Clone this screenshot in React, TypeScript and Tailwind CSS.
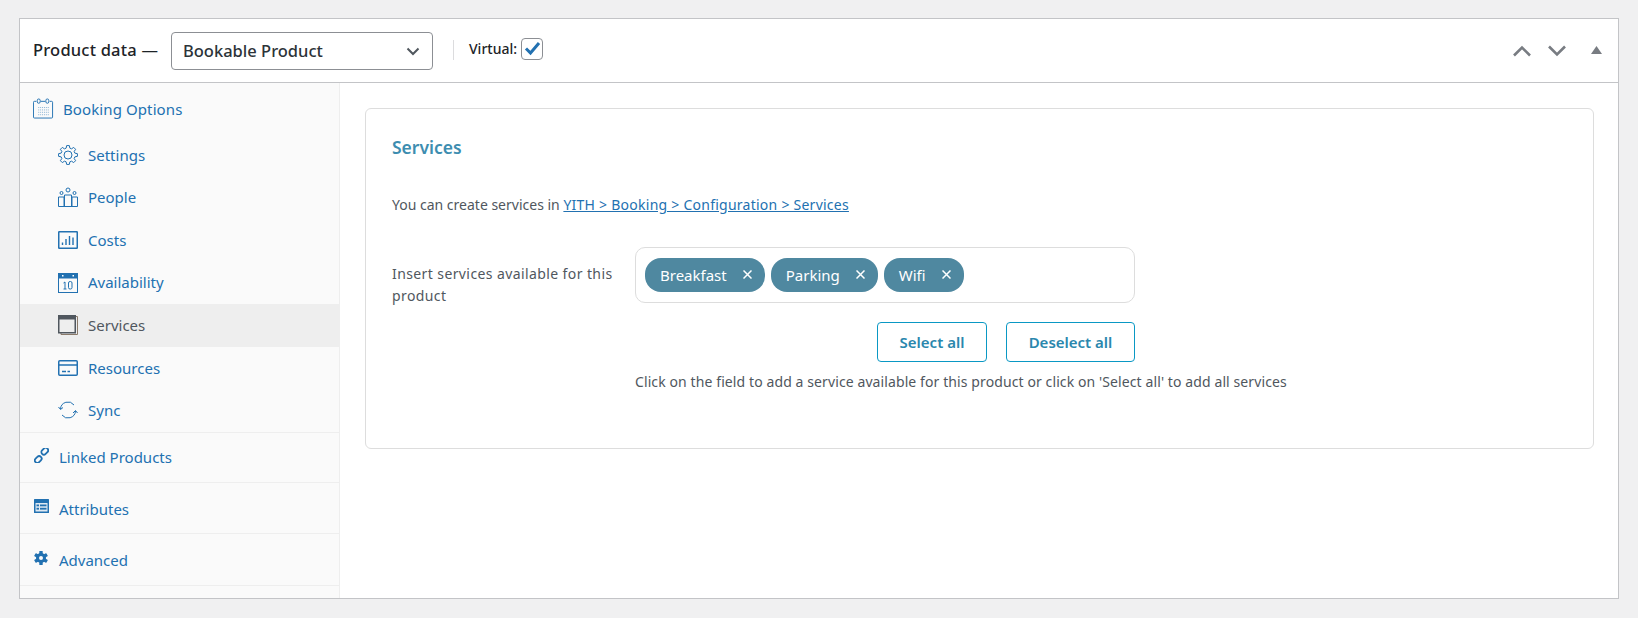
import React from "react";

const blue = "#2271b1";

function gearPath() {
  const cx = 10, cy = 10, pts: string[] = [];
  const n = 8;
  for (let i = 0; i < n; i++) {
    const a = (i / n) * Math.PI * 2 - Math.PI / 2;
    const s = (Math.PI * 2) / n;
    const list: [number, number][] = [
      [7.1, a - s * 0.34],
      [9.5, a - s * 0.18],
      [9.5, a + s * 0.18],
      [7.1, a + s * 0.34],
    ];
    for (const [r, t] of list) {
      pts.push(`${(cx + r * Math.cos(t)).toFixed(2)} ${(cy + r * Math.sin(t)).toFixed(2)}`);
    }
  }
  return "M" + pts.join("L") + "Z";
}

function Cal() {
  return (
    <svg width="21" height="21" viewBox="0 0 22 22" fill="none" stroke={blue} strokeWidth="1">
      <path d="M3.5 3.5H1.5a1 1 0 0 0-1 1v15.500a1 1 0 0 0 1 1h18a1 1 0 0 0 1-1V4.500a1 1 0 0 0-1-1h-2M8 3.500h5" />
      <rect x="4.500" y="1" width="3" height="4.500" rx="1.500" />
      <rect x="13.500" y="1" width="3" height="4.500" rx="1.500" />
      <path d="M5.500 10h11M5.500 12.500h11M5.500 15h11M5.500 17.500h11" strokeDasharray="1 1" opacity="0.55" />
    </svg>
  );
}
function Gear() {
  return (
    <svg width="20" height="20" viewBox="0 0 20 20" fill="none" stroke={blue} strokeWidth="1" strokeLinejoin="round">
      <path d={gearPath()} />
      <circle cx="10" cy="10" r="4" />
    </svg>
  );
}
function People() {
  return (
    <svg width="20" height="20" viewBox="0 0 20 20" fill="none" stroke={blue} strokeWidth="1">
      <circle cx="10" cy="3" r="2" />
      <circle cx="3.500" cy="6" r="1.500" />
      <circle cx="16.500" cy="6" r="1.500" />
      <path d="M.5 19.500V10h5.500v9.500M14 19.500V10h5.500v9.500M6.500 19.500V8h7v11.500M.5 19.500h19" />
    </svg>
  );
}
function Costs() {
  return (
    <svg width="20" height="18" viewBox="0 0 20 18" fill="none" stroke={blue}>
      <rect x="0.750" y="0.750" width="18.500" height="16.500" rx="0.500" strokeWidth="1.500" />
      <path d="M4.500 14v-2.500M8 14V8M11.500 14V5M15 14V6.500" strokeWidth="1.400" />
    </svg>
  );
}
function Avail() {
  return (
    <svg width="20" height="20" viewBox="0 0 20 20" fill="none">
      <rect x="0.500" y="0.500" width="19" height="19" stroke={blue} />
      <rect x="0" y="0" width="20" height="5.500" fill={blue} />
      <rect x="4" y="2" width="1.500" height="1.500" fill="#fff" />
      <rect x="14.500" y="2" width="1.500" height="1.500" fill="#fff" />
      <path d="M5.500 10l1.500-1v7M5.500 16h3" stroke={blue} strokeWidth="1" />
      <rect x="10.500" y="8.500" width="3.500" height="7.500" rx="1.500" stroke={blue} strokeWidth="1" />
    </svg>
  );
}
function Svc() {
  return (
    <svg width="20" height="20" viewBox="0 0 20 20" fill="none">
      <path d="M18 1.500h1.500v18H3V18" stroke="#8a7a6a" strokeWidth="1" />
      <rect x="0.750" y="0.750" width="16.500" height="17" stroke="#50575e" strokeWidth="1.500" />
      <rect x="0" y="0" width="18" height="4.500" fill="#50575e" />
    </svg>
  );
}
function Res() {
  return (
    <svg width="20" height="16" viewBox="0 0 20 16" fill="none" stroke={blue}>
      <rect x="0.750" y="0.750" width="18.500" height="14.500" rx="1" strokeWidth="1.500" />
      <path d="M1 5h18" strokeWidth="1.500" />
      <path d="M4 11.500h4M9.500 11.500h2.500" strokeWidth="1.400" />
    </svg>
  );
}
function Sync() {
  return (
    <svg width="20" height="18" viewBox="0 0 20 18" fill="none" stroke={blue} strokeWidth="1">
      <path d="M2.500 8a7.500 7.500 0 0 1 13.500-4" />
      <path d="M17.500 10a7.500 7.500 0 0 1-13.500 4" />
      <path d="M0.500 6l2 2.500 2.500-2" />
      <path d="M15 12l2.500-2.500 2 2.500" />
    </svg>
  );
}
function Link() {
  return (
    <svg width="15" height="15" viewBox="0 0 15 15" fill="none" stroke={blue} strokeWidth="1.800">
      <rect x="7" y="0.700" width="7.500" height="5" rx="2.500" transform="rotate(-45 10.750 3.200)" />
      <rect x="0.500" y="9" width="7.500" height="5" rx="2.500" transform="rotate(-45 4.250 11.500)" />
    </svg>
  );
}
function Attr() {
  return (
    <svg width="15" height="14" viewBox="0 0 15 14">
      <rect width="15" height="14" rx="0.500" fill={blue} />
      <rect x="1.500" y="4" width="12" height="8.500" fill="#dfe9f2" />
      <rect x="2.500" y="5.500" width="2.500" height="1.800" fill={blue} />
      <rect x="2.500" y="8.800" width="2.500" height="1.800" fill={blue} />
      <rect x="6" y="5.500" width="6.500" height="1.800" fill={blue} />
      <rect x="6" y="8.800" width="6.500" height="1.800" fill={blue} />
    </svg>
  );
}
function Adv() {
  const teeth = [0, 60, 120, 180, 240, 300];
  return (
    <svg width="14" height="14" viewBox="0 0 14 14">
      <circle cx="7" cy="7" r="5" fill={blue} />
      {teeth.map((a) => (
        <rect key={a} x="5.300" y="0" width="3.400" height="3.500" rx="0.500" fill={blue} transform={`rotate(${a} 7 7)`} />
      ))}
      <circle cx="7" cy="7" r="2" fill="#fafafa" />
    </svg>
  );
}

const subs = [
  { label: "Settings", icon: <Gear /> },
  { label: "People", icon: <People /> },
  { label: "Costs", icon: <Costs /> },
  { label: "Availability", icon: <Avail /> },
  { label: "Services", icon: <Svc />, active: true },
  { label: "Resources", icon: <Res /> },
  { label: "Sync", icon: <Sync /> },
];

const tops = [
  { label: "Linked Products", icon: <Link />, h: "h-[50px]", pad: "pt-0" },
  { label: "Attributes", icon: <Attr />, h: "h-[51px]", pad: "pt-[3px]" },
  { label: "Advanced", icon: <Adv />, h: "h-[52px]", pad: "pt-[2px]" },
];

function Chip({ label }: { label: string }) {
  return (
    <span className="flex h-[34px] items-center rounded-[16px] bg-[#4f88a0] pl-[15px] pr-[13px] text-[15px] text-white">
      {label}
      <svg className="ml-[16px] mb-[2px]" width="9" height="9" viewBox="0 0 9 9" stroke="#fff" strokeWidth="1.500" fill="none">
        <path d="M.5.5l8 8M8.500.5l-8 8" />
      </svg>
    </span>
  );
}

export default function App() {
  return (
    <div className="h-[618px] bg-[#f0f0f1] pl-[19px] pr-[19px] pt-[18px] text-[#50575e] font-['Noto_Sans','Open_Sans',sans-serif]">
      <div className="flex h-[581px] flex-col border border-[#c3c4c7] bg-white">
        <div className="flex h-[64px] shrink-0 items-center border-b border-[#c3c4c7] pl-[13px] pr-[16px]">
          <span className="w-[125px] whitespace-nowrap text-[16.500px] font-medium text-[#1d2327] mb-[1px] tracking-[0.2px]">Product data —</span>
          <div className="ml-[13px] flex h-[38px] w-[262px] items-center justify-between rounded-[4px] border border-[#8c8f94] pl-[11px] pr-[11px] text-[16.500px] font-medium text-[#2c3338]">
            <span className="pt-[2px]">Bookable Product</span>
            <svg width="16" height="16" viewBox="0 0 16 16" fill="none" stroke="#50575e" strokeWidth="2">
              <path d="M2.500 5.500L8 11l5.500-5.500" />
            </svg>
          </div>
          <div className="ml-[20px] mb-[2px] h-[20px] w-px bg-[#dcdcde]" />
          <span className="ml-[15px] mb-[4px] text-[14px] font-medium text-[#1d2327]">Virtual:</span>
          <span className="ml-[4px] mb-[4px] flex h-[22px] w-[22px] items-center justify-center rounded-[4px] border border-[#8c8f94] bg-white">
            <svg width="17" height="15" viewBox="0 0 17 15" fill="none" stroke="#2271b1" strokeWidth="3">
              <path d="M2 7.500l4.500 4.500L15 2" />
            </svg>
          </span>
          <div className="ml-auto flex items-center">
            <svg width="18" height="12" viewBox="0 0 18 12" fill="none" stroke="#787c82" strokeWidth="2.600">
              <path d="M1 10.500L9 2.500l8 8" />
            </svg>
            <svg className="ml-[17px]" width="18" height="12" viewBox="0 0 18 12" fill="none" stroke="#787c82" strokeWidth="2.600">
              <path d="M1 1.500l8 8 8-8" />
            </svg>
            <svg className="ml-[25px] mb-[2px]" width="11" height="8" viewBox="0 0 11 8" fill="#787c82">
              <path d="M5.500 0L11 8H0z" />
            </svg>
          </div>
        </div>

        <div className="flex min-h-0 flex-1">
          <div className="flex w-[320px] shrink-0 flex-col border-r border-[#eeeeee] bg-[#fafafa] text-[15px] text-[#2271b1]">
            <div className="border-b border-[#eeeeee]">
              <div className="flex h-[50.600px] items-center gap-[9px] pl-[13px] pt-[1px]">
                <Cal />
                <span className="tracking-[0.1px]">Booking Options</span>
              </div>
              {subs.map((s) => (
                <div
                  key={s.label}
                  className={`flex h-[42.600px] items-center ${s.active ? "bg-[#eeeeee] text-[#50575e]" : ""}`}
                >
                  <span className="flex w-[30px] ml-[38px] items-center">{s.icon}</span>
                  <span>{s.label}</span>
                </div>
              ))}
            </div>
            {tops.map((t) => (
              <div key={t.label} className={`flex ${t.h} items-center border-b border-[#eeeeee]`}>
                <span className="ml-[14px] flex w-[25px] items-center pb-[3px]">{t.icon}</span>
                <span className={t.pad}>{t.label}</span>
              </div>
            ))}
          </div>

          <div className="min-w-0 flex-1 pl-[25px] pr-[24px] pt-[25px]">
            <div className="h-[341px] rounded-[6px] border border-[#dddddd] pl-[26px] pt-[25px]">
              <h2 className="text-[17.500px] font-semibold leading-[26px] text-[#3d8db0]">Services</h2>
              <p className="mt-[34px] text-[14px] leading-[22px]">
                You can create services in{" "}
                <span className="text-[#2271b1] underline tracking-[0.25px]">YITH &gt; Booking &gt; Configuration &gt; Services</span>
              </p>
              <div className="mt-[31px] flex">
                <div className="w-[243px] pt-[16px] text-[14px] leading-[22px] tracking-[0.4px]">
                  Insert services available for this
                  <br />
                  product
                </div>
                <div className="w-[500px]">
                  <div className="flex h-[56px] items-center gap-[6px] rounded-[10px] border border-[#dddddd] pl-[9px]">
                    <Chip label="Breakfast" />
                    <Chip label="Parking" />
                    <Chip label="Wifi" />
                  </div>
                  <div className="mt-[19px] flex justify-end gap-[19px]">
                    <button className="flex h-[40px] w-[110px] items-center justify-center rounded-[4px] border border-[#0a98c4] bg-white text-[15px] font-semibold text-[#2a87ad]">
                      Select all
                    </button>
                    <button className="flex h-[40px] w-[129px] items-center justify-center rounded-[4px] border border-[#0a98c4] bg-white text-[15px] font-semibold text-[#2a87ad]">
                      Deselect all
                    </button>
                  </div>
                  <p className="mt-[9px] whitespace-nowrap text-[14px] leading-[22px] tracking-[0.1px]">
                    Click on the field to add a service available for this product or click on 'Select all' to add all services
                  </p>
                </div>
              </div>
            </div>
          </div>
        </div>
      </div>
    </div>
  );
}
